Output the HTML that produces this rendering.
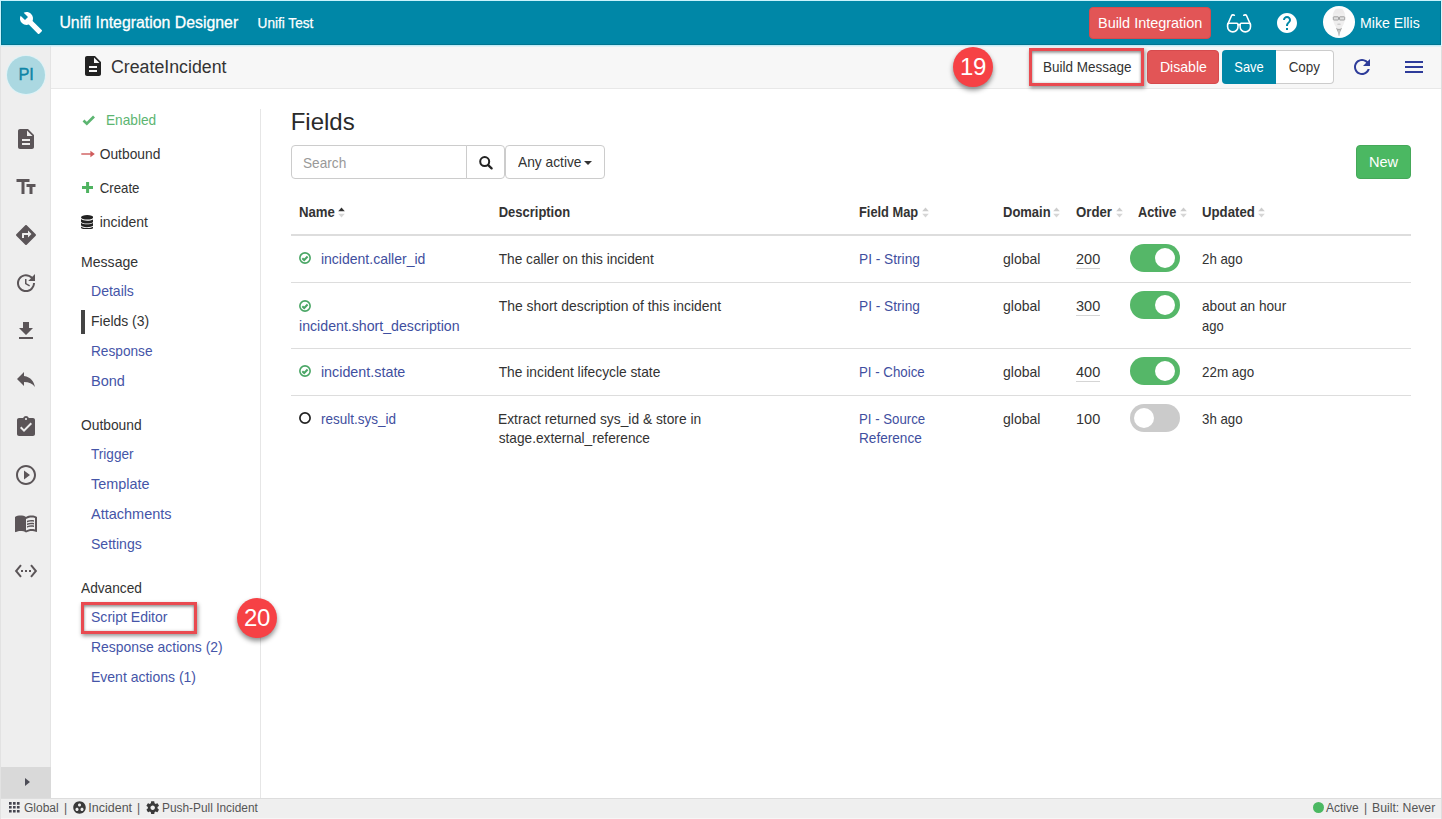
<!DOCTYPE html>
<html>
<head>
<meta charset="utf-8">
<title>Unifi Integration Designer</title>
<style>
*{box-sizing:border-box;margin:0;padding:0}
html,body{width:1442px;height:819px;overflow:hidden;background:#fff}
body{font-family:"Liberation Sans",sans-serif;font-size:14px;color:#333;position:relative}
.abs{position:absolute}
svg{display:block}
#frame{position:absolute;left:0;top:0;width:1442px;height:819px;pointer-events:none;z-index:50}
#frame i{position:absolute;display:block}
/* header */
#hdr{position:absolute;left:1px;top:1px;width:1440px;height:44px;background:#0087a7;box-shadow:inset 1px -1px 0 #007591, inset -1px 0 0 #007591}
#hdr .title{position:absolute;left:58px;top:11px;font-size:16.5px;color:#fff;white-space:nowrap;line-height:20px;-webkit-text-stroke:.3px #fff}
#hdr .sub{position:absolute;left:256px;top:12px;font-size:14px;color:#fff;white-space:nowrap;line-height:20px;-webkit-text-stroke:.25px #fff}
.btn{position:absolute;white-space:nowrap;text-align:center;border-radius:4px;font-size:14.5px;line-height:20px}
/* sub header */
#sub{position:absolute;left:51px;top:45px;width:1390px;height:44px;background:#f7f7f7;border-bottom:1px solid #e8e8e8}
#side{position:absolute;left:1px;top:45px;width:50px;height:753px;background:#eeeeee;border-right:1px solid #e4e4e4}
#side .ic{position:absolute;left:13px;width:24px;height:24px}
#side svg{fill:#5b5558}
#tog{position:absolute;left:1px;top:767px;width:50px;height:31px;background:#d9d9d9}
#foot{position:absolute;left:1px;top:798px;width:1440px;height:20px;background:#efefef;border-top:1px solid #dddddd;font-size:12px;color:#555}
/* nav */
.nav{position:absolute;white-space:nowrap;font-size:14.5px;line-height:20px;color:#333}
.nav.l{color:#4555a8}
/* table */
.th{position:absolute;top:202px;font-weight:bold;font-size:14.5px;line-height:20px;color:#333;white-space:nowrap}
.td{position:absolute;font-size:14.5px;line-height:19px;color:#333;white-space:nowrap}
.td.l{color:#3f4fa0}
.hr{position:absolute;left:291px;width:1120px;height:1px;background:#dddddd}
.sw{position:absolute;left:1130px;width:50px;height:28px;border-radius:14px;background:#55b768}
.sw i{position:absolute;top:4px;left:25px;width:20.400px;height:20.400px;border-radius:11px;background:#fff}
.sw.off{background:#cbcbcb}
.sw.off i{left:3.700px}
.btn span{display:inline-block;transform-origin:50% 50%}
.fitl{transform-origin:0 50%}
.sort{position:absolute;top:207px;width:7px;height:11px}
</style>
<style id="fit">
#t_title{transform:translate(0.40px,0.00px) scaleX(0.9602);transform-origin:0 50%}
#t_sub{transform:translate(0.60px,0.00px) scaleX(0.9724);transform-origin:0 50%}
#t_ci{transform:translate(0.00px,0.00px) scaleX(0.9863);transform-origin:0 50%}
#t_user{transform:translate(-1.00px,0.00px) scaleX(0.9750);transform-origin:0 50%}
#b_bi{transform:translate(-0.20px,0.00px) scaleX(0.9963);transform-origin:50% 50%}
#b_bm{transform:translate(0.70px,0.00px) scaleX(0.9287);transform-origin:50% 50%}
#b_dis{transform:translate(0.20px,0.00px) scaleX(0.9716);transform-origin:50% 50%}
#b_save{transform:translate(0.50px,0.00px) scaleX(0.8906);transform-origin:50% 50%}
#b_copy{transform:translate(-0.60px,0.00px) scaleX(0.9235);transform-origin:50% 50%}
#n_en{transform:translate(-1.00px,0.00px) scaleX(0.9423);transform-origin:0 50%}
#n_ob{transform:translate(0.70px,0.00px) scaleX(0.9524);transform-origin:0 50%}
#n_cr{transform:translate(0.70px,0.00px) scaleX(0.9140);transform-origin:0 50%}
#n_in{transform:translate(0.70px,0.00px) scaleX(0.9660);transform-origin:0 50%}
#n_msg{transform:translate(0.00px,0.00px) scaleX(0.9707);transform-origin:0 50%}
#n_det{transform:translate(0.00px,0.00px) scaleX(0.9674);transform-origin:0 50%}
#n_fld{transform:translate(0.00px,0.00px) scaleX(0.9627);transform-origin:0 50%}
#n_rsp{transform:translate(0.00px,0.00px) scaleX(0.9422);transform-origin:0 50%}
#n_bnd{transform:translate(0.00px,0.00px) scaleX(1.0000);transform-origin:0 50%}
#n_out{transform:translate(0.00px,0.00px) scaleX(0.9524);transform-origin:0 50%}
#n_trg{transform:translate(0.00px,0.00px) scaleX(0.9370);transform-origin:0 50%}
#n_tpl{transform:translate(0.00px,0.00px) scaleX(0.9934);transform-origin:0 50%}
#n_att{transform:translate(0.00px,0.00px) scaleX(1.0000);transform-origin:0 50%}
#n_set{transform:translate(0.00px,0.00px) scaleX(0.9689);transform-origin:0 50%}
#n_adv{transform:translate(0.00px,0.00px) scaleX(0.9453);transform-origin:0 50%}
#n_se{transform:translate(0.00px,0.00px) scaleX(0.9679);transform-origin:0 50%}
#n_ra{transform:translate(0.00px,0.00px) scaleX(0.9610);transform-origin:0 50%}
#n_ea{transform:translate(0.00px,0.00px) scaleX(0.9654);transform-origin:0 50%}
#h_fields{transform:translate(0.70px,0.00px) scaleX(1.0000);transform-origin:0 50%}
#t_search{transform:translate(-1.00px,0.00px) scaleX(0.9409);transform-origin:0 50%}
#t_any{transform:translate(0.00px,0.00px) scaleX(0.9490);transform-origin:0 50%}
#b_new{transform:translate(0.00px,0.00px) scaleX(1.0051);transform-origin:50% 50%}
#h_name{transform:translate(0.00px,0.00px) scaleX(0.9093);transform-origin:0 50%}
#h_desc{transform:translate(0.70px,0.00px) scaleX(0.8949);transform-origin:0 50%}
#h_fm{transform:translate(0.00px,0.00px) scaleX(0.8846);transform-origin:0 50%}
#h_dom{transform:translate(0.00px,0.00px) scaleX(0.8953);transform-origin:0 50%}
#h_ord{transform:translate(0.00px,0.00px) scaleX(0.9113);transform-origin:0 50%}
#h_act{transform:translate(0.00px,0.00px) scaleX(0.8800);transform-origin:0 50%}
#h_upd{transform:translate(0.00px,0.00px) scaleX(0.9106);transform-origin:0 50%}
#r0_name{transform:translate(-0.10px,0.00px) scaleX(0.9673);transform-origin:0 50%}
#r1_name{transform:translate(0.00px,0.00px) scaleX(0.9767);transform-origin:0 50%}
#r2_name{transform:translate(-0.10px,0.00px) scaleX(0.9881);transform-origin:0 50%}
#r3_name{transform:translate(-0.10px,0.00px) scaleX(0.9317);transform-origin:0 50%}
#r0_d1{transform:translate(0.70px,0.00px) scaleX(0.9431);transform-origin:0 50%}
#r1_d1{transform:translate(0.70px,0.00px) scaleX(0.9582);transform-origin:0 50%}
#r2_d1{transform:translate(0.70px,0.00px) scaleX(0.9506);transform-origin:0 50%}
#r3_d1{transform:translate(0.00px,0.00px) scaleX(0.9514);transform-origin:0 50%}
#r3_d2{transform:translate(0.70px,0.00px) scaleX(0.9431);transform-origin:0 50%}
#r0_f1{transform:translate(0.00px,0.00px) scaleX(0.9444);transform-origin:0 50%}
#r1_f1{transform:translate(0.00px,0.00px) scaleX(0.9444);transform-origin:0 50%}
#r2_f1{transform:translate(0.00px,0.00px) scaleX(0.9157);transform-origin:0 50%}
#r3_f1{transform:translate(0.00px,0.00px) scaleX(0.9127);transform-origin:0 50%}
#r3_f2{transform:translate(0.00px,0.00px) scaleX(0.9379);transform-origin:0 50%}
#r0_dom{transform:translate(0.00px,0.00px) scaleX(0.9658);transform-origin:0 50%}
#r1_dom{transform:translate(0.00px,0.00px) scaleX(0.9658);transform-origin:0 50%}
#r2_dom{transform:translate(0.00px,0.00px) scaleX(0.9658);transform-origin:0 50%}
#r3_dom{transform:translate(0.00px,0.00px) scaleX(0.9658);transform-origin:0 50%}
#r0_ord{transform:translate(0.00px,0.00px) scaleX(1.0000);transform-origin:0 50%}
#r1_ord{transform:translate(0.00px,0.00px) scaleX(1.0000);transform-origin:0 50%}
#r2_ord{transform:translate(0.00px,0.00px) scaleX(1.0000);transform-origin:0 50%}
#r3_ord{transform:translate(0.00px,0.00px) scaleX(1.0000);transform-origin:0 50%}
#r0_u1{transform:translate(0.00px,0.00px) scaleX(0.9159);transform-origin:0 50%}
#r1_u1{transform:translate(0.00px,0.00px) scaleX(0.9411);transform-origin:0 50%}
#r1_u2{transform:translate(0.00px,0.00px) scaleX(0.8958);transform-origin:0 50%}
#r2_u1{transform:translate(0.00px,0.00px) scaleX(0.9232);transform-origin:0 50%}
#r3_u1{transform:translate(0.00px,0.00px) scaleX(0.9159);transform-origin:0 50%}
#f_glob{transform:translate(0.00px,0.00px) scaleX(1.0000);transform-origin:0 50%}
#f_inc{transform:translate(-0.70px,0.00px) scaleX(1.0420);transform-origin:0 50%}
#f_pp{transform:translate(0.00px,0.00px) scaleX(0.9906);transform-origin:0 50%}
#f_act{transform:translate(0.00px,0.00px) scaleX(1.0000);transform-origin:0 50%}
#f_built{transform:translate(0.00px,0.00px) scaleX(1.0197);transform-origin:0 50%}
</style>
</head>
<body>
<div id="hdr">
  <svg class="abs" style="left:18px;top:10px" width="24" height="24" viewBox="0 0 24 24" fill="#fff"><path d="M22.7 19l-9.1-9.1c.9-2.3.4-5-1.5-6.9-2-2-5-2.4-7.4-1.3L9 6 6 9 1.6 4.7C.4 7.1.9 10.1 2.9 12.1c1.9 1.9 4.6 2.4 6.9 1.5l9.1 9.1c.4.4 1 .4 1.4 0l2.3-2.3c.5-.4.5-1.1.1-1.4z"/></svg>
  <div class="title" id="t_title">Unifi Integration Designer</div>
  <div class="sub" id="t_sub">Unifi Test</div>
  <div class="btn" style="left:1088px;top:6px;width:122px;height:32px;background:#e25556;border:1px solid #d64a4d;color:#fff;padding-top:5px"><span id="b_bi">Build Integration</span></div>
  <svg class="abs" id="i_glass" style="left:1225px;top:13px" width="26" height="20" viewBox="0 0 26 20" fill="none" stroke="#fff" stroke-width="1.6" stroke-linecap="round" stroke-linejoin="round"><path d="M1.600 10.400Q1.600 9.300 2.700 9.300H10.900Q12 9.300 12 10.400V12.700A5.200 5.200 0 0 1 1.600 12.700Z"/><path d="M14.100 10.400Q14.100 9.300 15.200 9.300H23.400Q24.500 9.300 24.500 10.400V12.700A5.200 5.200 0 0 1 14.100 12.700Z"/><path d="M12 10.800h2.100"/><path d="M1.900 10L5.500 1.800Q6 .7 7.100 .9L8.300 1.200M24.200 10L20.600 1.800Q20.100 .7 19 .9L17.800 1.200"/></svg>
  <svg class="abs" id="i_help" style="left:1274px;top:10px" width="24" height="24" viewBox="0 0 24 24" fill="#fff"><path d="M12 2C6.48 2 2 6.48 2 12s4.48 10 10 10 10-4.48 10-10S17.52 2 12 2zm1 17h-2v-2h2v2zm2.07-7.75l-.9.92C13.45 12.9 13 13.5 13 15h-2v-.5c0-1.1.45-2.1 1.17-2.83l1.24-1.26c.37-.36.59-.86.59-1.41 0-1.1-.9-2-2-2s-2 .9-2 2H8c0-2.21 1.79-4 4-4s4 1.79 4 4c0 .88-.36 1.68-.93 2.25z"/></svg>
  <div class="abs" id="avatar" style="left:1322px;top:5px;width:32px;height:32px;border-radius:16px;background:#fdfdfd;overflow:hidden">
    <svg width="32" height="32" viewBox="0 0 32 32"><path d="M16 2.500c3.600 0 6.200 3 6.200 7.500 0 3.500-.8 7-2.200 9.500-1 1.800-2.400 3-4 3s-3-1.200-4-3C10.600 17 9.800 13.500 9.800 10c0-4.500 2.600-7.500 6.200-7.500z" fill="#efeeee"/><path d="M12.400 2.800h7.200l1.800 5H10.600z" fill="#e9e8e8" opacity=".6"/><rect x="10.300" y="10.800" width="5.200" height="3.200" rx=".6" fill="#e0e0e0" stroke="#9a9a9a" stroke-width=".9"/><rect x="16.500" y="10.800" width="5.200" height="3.200" rx=".6" fill="#e0e0e0" stroke="#9a9a9a" stroke-width=".9"/><path d="M15.500 11.800h1" stroke="#9a9a9a" stroke-width=".9"/><path d="M14.600 17.500h2.800l.3 1.600h-3.400z" fill="#cfcfcf"/><path d="M12.800 21.500c1 .9 2 1.300 3.200 1.300s2.200-.4 3.200-1.300l-1.900 4.300L16 30l-1.300-4.200z" fill="#a9a9a9"/><path d="M15.300 24h1.400l-.3 6h-.8z" fill="#cfcfcf"/></svg>
  </div>
  <div class="abs" id="t_user" style="left:1360px;top:12px;font-size:14.5px;line-height:20px;color:#fff;white-space:nowrap">Mike Ellis</div>
</div>
<div id="side">
  <div class="abs" style="left:6px;top:11px;width:38px;height:38px;border-radius:19px;background:#abd8e1;box-shadow:0 0 0 1px #dff2f6;color:#0e85a6;font-size:16.400px;line-height:36px;text-align:center;letter-spacing:-.2px;-webkit-text-stroke:.4px #0e85a6" id="t_pi">PI</div>
  <svg class="ic" style="top:82px" viewBox="0 0 24 24"><path d="M14 2H6c-1.1 0-1.99.9-1.99 2L4 20c0 1.1.89 2 1.99 2H18c1.1 0 2-.9 2-2V8l-6-6zm2 16H8v-2h8v2zm0-4H8v-2h8v2zm-3-5V3.5L18.5 9H13z"/></svg>
  <svg class="ic" style="top:130px" viewBox="0 0 24 24"><path d="M2.5 4v3h5v12h3V7h5V4h-13zm19 5h-9v3h3v7h3v-7h3V9z"/></svg>
  <svg class="ic" style="top:178px" viewBox="0 0 24 24"><path d="M21.71 11.29l-9-9c-.39-.39-1.02-.39-1.41 0l-9 9c-.39.39-.39 1.02 0 1.41l9 9c.39.39 1.02.39 1.41 0l9-9c.39-.38.39-1.01 0-1.41zM14 14.5V12h-4v3H8v-4c0-.55.45-1 1-1h5V7.5l3.5 3.5-3.5 3.5z"/></svg>
  <svg class="ic" style="top:226px" viewBox="0 0 24 24"><path d="M21 10.12h-6.78l2.74-2.82c-2.73-2.7-7.15-2.8-9.88-.1-2.73 2.71-2.73 7.08 0 9.79 2.73 2.71 7.15 2.71 9.88 0C18.32 15.65 19 14.08 19 12.1h2c0 1.98-.88 4.55-2.64 6.29-3.51 3.48-9.21 3.48-12.72 0-3.5-3.47-3.53-9.11-.02-12.58 3.51-3.47 9.14-3.47 12.65 0L21 3v7.12zM12.5 8v4.25l3.5 2.08-.72 1.21L11 13V8h1.5z"/></svg>
  <svg class="ic" style="top:274px" viewBox="0 0 24 24"><path d="M19 9h-4V3H9v6H5l7 7 7-7zM5 18v2h14v-2H5z"/></svg>
  <svg class="ic" style="top:322px" viewBox="0 0 24 24"><path d="M10 9V5l-7 7 7 7v-4.1c5 0 8.5 1.6 11 5.1-1-5-4-10-11-11z"/></svg>
  <svg class="ic" style="top:370px" viewBox="0 0 24 24"><path d="M19 3h-4.18C14.4 1.84 13.3 1 12 1c-1.3 0-2.4.84-2.82 2H5c-1.1 0-2 .9-2 2v14c0 1.1.9 2 2 2h14c1.1 0 2-.9 2-2V5c0-1.1-.9-2-2-2zm-7 0c.55 0 1 .45 1 1s-.45 1-1 1-1-.45-1-1 .45-1 1-1zm-2 14l-4-4 1.41-1.41L10 14.17l6.59-6.59L18 9l-8 8z"/></svg>
  <svg class="ic" style="top:418px" viewBox="0 0 24 24"><path d="M10 16.5l6-4.5-6-4.5v9zM12 2C6.48 2 2 6.48 2 12s4.48 10 10 10 10-4.48 10-10S17.52 2 12 2zm0 18c-4.41 0-8-3.59-8-8s3.59-8 8-8 8 3.59 8 8-3.59 8-8 8z"/></svg>
  <svg class="ic" style="top:466px" viewBox="0 0 24 24"><path d="M21 5c-1.110-.35-2.330-.5-3.500-.5-1.950 0-4.050.4-5.500 1.500-1.450-1.100-3.550-1.500-5.500-1.500S2.450 4.900 1 6v14.650c0 .25.250.5.5.5.1 0 .15-.05.250-.05C3.100 20.450 5.050 20 6.500 20c1.950 0 4.050.4 5.500 1.500 1.350-.85 3.800-1.500 5.500-1.500 1.650 0 3.350.3 4.750 1.050.1.050.15.050.250.050.250 0 .5-.25.5-.5V6c-.6-.45-1.250-.75-2-1zm0 13.500c-1.100-.35-2.300-.5-3.500-.5-1.700 0-4.150.65-5.500 1.500V8c1.350-.85 3.800-1.500 5.500-1.500 1.200 0 2.400.15 3.500.5v11.500zM17.500 10.500c.880 0 1.730.090 2.500.260V9.240c-.79-.15-1.640-.24-2.500-.24-1.700 0-3.240.29-4.500.83v1.660c1.130-.64 2.700-.99 4.500-.99zM13 12.490v1.660c1.130-.64 2.700-.99 4.500-.99.880 0 1.730.090 2.500.260V11.900c-.79-.15-1.640-.24-2.500-.24-1.700 0-3.240.3-4.500.83zM17.500 14.330c-1.700 0-3.240.29-4.500.83v1.660c1.130-.64 2.700-.99 4.500-.99.880 0 1.730.090 2.500.260v-1.520c-.79-.16-1.640-.24-2.500-.24z"/></svg>
  <svg class="ic" style="top:514px" viewBox="0 0 24 24"><path d="M7.77 6.76L6.23 5.48.82 12l5.41 6.520 1.54-1.28L3.42 12l4.35-5.240zM7 13h2v-2H7v2zm10-2h-2v2h2v-2zm-6 2h2v-2h-2v2zm6.770-7.520l-1.54 1.280L20.580 12l-4.350 5.240 1.540 1.280L23.180 12l-5.410-6.520z"/></svg>
</div>
<div id="sub">
  <svg class="abs" style="left:30px;top:9px" width="24" height="24" viewBox="0 0 24 24" fill="#222"><path d="M14 2H6c-1.1 0-1.99.9-1.99 2L4 20c0 1.1.89 2 1.99 2H18c1.1 0 2-.9 2-2V8l-6-6zm2 16H8v-2h8v2zm0-4H8v-2h8v2zm-3-5V3.5L18.5 9H13z"/></svg>
  <div class="abs" id="t_ci" style="left:60px;top:10px;font-size:18px;line-height:24px;color:#333;white-space:nowrap">CreateIncident</div>
  <div class="abs" id="c19" style="left:902px;top:2px;width:40px;height:40px;border-radius:20px;background:#f64145;box-shadow:0 3px 5px rgba(0,0,0,.45);color:#fff;font-size:24px;line-height:40px;letter-spacing:-.3px;text-align:center">19</div>
  <div class="abs" id="bm_box" style="left:978px;top:3px;width:115px;height:38px;border:3px solid #e94a50;background:#fff;box-shadow:1px 2px 4px rgba(0,0,0,.42), inset 0 2px 3px rgba(0,0,0,.34), inset 0 0 3px rgba(0,0,0,.22)"></div>
  <div class="btn" style="left:981px;top:6px;width:109px;height:32px;color:#333;padding-top:6px"><span id="b_bm">Build Message</span></div>
  <div class="btn" style="left:1096px;top:5px;width:72px;height:34px;background:#e25556;border:1px solid #d64a4d;color:#fff;padding-top:6px"><span id="b_dis">Disable</span></div>
  <div class="btn" style="left:1171px;top:5px;width:54px;height:34px;background:#0087a7;color:#fff;padding-top:7px;border-radius:4px 0 0 4px"><span id="b_save">Save</span></div>
  <div class="btn" style="left:1225px;top:5px;width:58px;height:34px;background:#fff;color:#333;padding-top:6px;border:1px solid #ccc;border-left:none;border-radius:0 4px 4px 0"><span id="b_copy">Copy</span></div>
  <svg class="abs" id="i_ref" style="left:1298.500px;top:10px" width="24" height="24" viewBox="0 0 24 24" fill="#2e3c9a"><path d="M17.65 6.35C16.2 4.9 14.21 4 12 4c-4.42 0-7.99 3.58-7.990 8s3.570 8 7.990 8c3.730 0 6.840-2.550 7.730-6h-2.080c-.82 2.330-3.040 4-5.650 4-3.310 0-6-2.690-6-6s2.690-6 6-6c1.660 0 3.140.69 4.220 1.780L13 11h7V4l-2.350 2.350z"/></svg>
  <svg class="abs" id="i_menu" style="left:1351px;top:10px" width="24" height="24" viewBox="0 0 24 24" fill="#2e3c9a"><path d="M3 18h18v-2H3v2zm0-5h18v-2H3v2zm0-7v2h18V6H3z"/></svg>
</div>
<div id="main">
<div class="abs" style="left:260px;top:109px;width:1px;height:689px;background:#e6e6e6"></div>
<svg class="abs" id="i_chk" style="left:81.500px;top:115px" width="13.500" height="10.500" viewBox="0 0 13.500 10.500"><path d="M1.500 5.600l3.300 3.100L12 1.500" fill="none" stroke="#5cb571" stroke-width="2.700"/></svg>
<div class="nav "  id="n_en" style="color:#5cb571;left:107px;top:110px">Enabled</div>
<svg class="abs" id="i_arr" style="left:80.500px;top:150px" width="14" height="8" viewBox="0 0 14 8"><path d="M.3 4h10" stroke="#cf5b5b" stroke-width="1.400" fill="none"/><path d="M9.400 .8L13.800 4 9.400 7.200z" fill="#cf5b5b"/></svg>
<div class="nav " id="n_ob" style="left:99px;top:144px">Outbound</div>
<svg class="abs" id="i_plus" style="left:81.500px;top:181.800px" width="11.200" height="11.200" viewBox="0 0 11.200 11.200"><path d="M5.600 0v11.200M0 5.600h11.200" stroke="#4fb360" stroke-width="3" fill="none"/></svg>
<div class="nav " id="n_cr" style="left:99px;top:178px">Create</div>
<svg class="abs" id="i_db" style="left:80.800px;top:215px" width="12.400" height="14.400" viewBox="0 0 12.400 14.400" fill="#222"><ellipse cx="6.200" cy="2.300" rx="6.200" ry="2.300"/><path d="M0 4.100c1.200 1.100 3.600 1.600 6.200 1.600s5-.5 6.200-1.600v2.300c0 1.200-2.800 2.200-6.200 2.200S0 7.600 0 6.400z"/><path d="M0 8c1.200 1.100 3.600 1.600 6.200 1.600s5-.5 6.200-1.600v2.300c0 1.200-2.800 2.200-6.200 2.200S0 11.500 0 10.300z" transform="translate(0,-.3)"/><path d="M0 11.500c1.200 1.100 3.600 1.600 6.200 1.600s5-.5 6.200-1.600v.9c0 1.200-2.800 2-6.200 2S0 13.600 0 12.400z"/></svg>
<div class="nav " id="n_in" style="left:99px;top:212px">incident</div>
<div class="nav " id="n_msg" style="left:81px;top:252px">Message</div>
<div class="nav l" id="n_det" style="left:91px;top:281px">Details</div>
<div class="abs" style="left:81px;top:310px;width:4px;height:24px;background:#444"></div>
<div class="nav " id="n_fld" style="left:91px;top:311px">Fields (3)</div>
<div class="nav l" id="n_rsp" style="left:91px;top:341px">Response</div>
<div class="nav l" id="n_bnd" style="left:91px;top:371px">Bond</div>
<div class="nav " id="n_out" style="left:81px;top:415px">Outbound</div>
<div class="nav l" id="n_trg" style="left:91px;top:444px">Trigger</div>
<div class="nav l" id="n_tpl" style="left:91px;top:474px">Template</div>
<div class="nav l" id="n_att" style="left:91px;top:504px">Attachments</div>
<div class="nav l" id="n_set" style="left:91px;top:534px">Settings</div>
<div class="nav " id="n_adv" style="left:81px;top:578px">Advanced</div>
<div class="abs" id="se_box" style="left:81px;top:602px;width:116px;height:32px;border:3px solid #e94a50;box-shadow:1px 2px 4px rgba(0,0,0,.42), inset 0 2px 3px rgba(0,0,0,.34), inset 0 0 3px rgba(0,0,0,.22)"></div>
<div class="nav l" id="n_se" style="left:91px;top:607px">Script Editor</div>
<div class="nav l" id="n_ra" style="left:91px;top:637px">Response actions (2)</div>
<div class="nav l" id="n_ea" style="left:91px;top:667px">Event actions (1)</div>
<div class="abs" id="c20" style="left:237px;top:598px;width:40px;height:40px;border-radius:20px;background:#f64145;box-shadow:0 3px 5px rgba(0,0,0,.45);color:#fff;font-size:24px;line-height:40px;letter-spacing:-.3px;text-align:center">20</div>
<div class="abs" id="h_fields" style="left:290px;top:107px;font-size:24px;line-height:30px;color:#2a2a2a;white-space:nowrap">Fields</div>
<div class="abs" style="left:291px;top:145px;width:176px;height:34px;border:1px solid #ccc;border-radius:4px 0 0 4px;background:#fff"></div>
<div class="abs" id="t_search" style="left:304px;top:153px;font-size:14.5px;line-height:20px;color:#999">Search</div>
<div class="abs" style="left:466px;top:145px;width:39px;height:34px;border:1px solid #ccc;border-radius:0 4px 4px 0;background:#fff"></div>
<svg class="abs" id="i_srch" style="left:479px;top:156.300px" width="14" height="14" viewBox="0 0 14 14"><circle cx="5.700" cy="5.600" r="4.500" fill="none" stroke="#222" stroke-width="2"/><path d="M9.200 9.100l3.400 3.300" stroke="#222" stroke-width="2.200" stroke-linecap="round"/></svg>
<div class="abs" style="left:505px;top:145px;width:100px;height:34px;border:1px solid #ccc;border-radius:4px;background:#fff"></div>
<div class="abs" id="t_any" style="left:518px;top:152px;font-size:14.5px;line-height:20px;color:#333;white-space:nowrap">Any active</div>
<div class="abs" style="left:584px;top:161px;width:0;height:0;border-left:4px solid transparent;border-right:4px solid transparent;border-top:4px solid #333"></div>
<div class="btn" style="left:1356px;top:145px;width:55px;height:34px;background:#4bb862;border:1px solid #45a859;color:#fff;padding-top:6px"><span id="b_new">New</span></div>
<div class="th" id="h_name" style="left:299px">Name</div>
<svg class="sort" style="left:338px" viewBox="0 0 7 11"><path d="M3.500 0.500L6.800 4.300H.2z" fill="#333"/><path d="M3.500 10.500L6.800 6.700H.2z" fill="#d6d6d6"/></svg>
<div class="th" id="h_desc" style="left:498px">Description</div>
<div class="th" id="h_fm" style="left:859px">Field Map</div>
<svg class="sort" style="left:922px" viewBox="0 0 7 11"><path d="M3.500 0.500L6.800 4.300H.2z" fill="#ccc"/><path d="M3.500 10.500L6.800 6.700H.2z" fill="#d6d6d6"/></svg>
<div class="th" id="h_dom" style="left:1003px">Domain</div>
<svg class="sort" style="left:1053px" viewBox="0 0 7 11"><path d="M3.500 0.500L6.800 4.300H.2z" fill="#ccc"/><path d="M3.500 10.500L6.800 6.700H.2z" fill="#d6d6d6"/></svg>
<div class="th" id="h_ord" style="left:1076px">Order</div>
<svg class="sort" style="left:1116px" viewBox="0 0 7 11"><path d="M3.500 0.500L6.800 4.300H.2z" fill="#ccc"/><path d="M3.500 10.500L6.800 6.700H.2z" fill="#d6d6d6"/></svg>
<div class="th" id="h_act" style="left:1138px">Active</div>
<svg class="sort" style="left:1180px" viewBox="0 0 7 11"><path d="M3.500 0.500L6.800 4.300H.2z" fill="#ccc"/><path d="M3.500 10.500L6.800 6.700H.2z" fill="#d6d6d6"/></svg>
<div class="th" id="h_upd" style="left:1202px">Updated</div>
<svg class="sort" style="left:1258px" viewBox="0 0 7 11"><path d="M3.500 0.500L6.800 4.300H.2z" fill="#ccc"/><path d="M3.500 10.500L6.800 6.700H.2z" fill="#d6d6d6"/></svg>
<div class="hr" style="top:234px;height:2px"></div>
<div class="hr" style="top:282px"></div>
<div class="hr" style="top:348px"></div>
<div class="hr" style="top:395px"></div>
<svg class="abs" style="left:299.100px;top:252px" width="12" height="12" viewBox="0 0 12 12" fill="none" stroke="#4aa665"><circle cx="6" cy="6" r="5.150" stroke-width="1.600"/><path d="M3.300 6.200l1.900 1.800 3.400-3.500" stroke-width="2"/></svg>
<div class="td l" id="r0_name" style="left:321px;top:250px">incident.caller_id</div>
<div class="td " id="r0_d1" style="left:498px;top:250px">The caller on this incident</div>
<div class="td l" id="r0_f1" style="left:859px;top:250px">PI - String</div>
<div class="td " id="r0_dom" style="left:1003px;top:250px">global</div>
<div class="td " id="r0_ord" style="left:1076px;top:250px">200</div>
<div class="abs" style="left:1076px;top:268px;width:24px;height:1px;background:#d5d5d5"></div>
<div class="sw" style="top:244px"><i></i></div>
<div class="td " id="r0_u1" style="left:1202px;top:250px">2h ago</div>
<svg class="abs" style="left:299.100px;top:300px" width="12" height="12" viewBox="0 0 12 12" fill="none" stroke="#4aa665"><circle cx="6" cy="6" r="5.150" stroke-width="1.600"/><path d="M3.300 6.200l1.900 1.800 3.400-3.500" stroke-width="2"/></svg>
<div class="td l" id="r1_name" style="left:299px;top:317px">incident.short_description</div>
<div class="td " id="r1_d1" style="left:498px;top:297px">The short description of this incident</div>
<div class="td l" id="r1_f1" style="left:859px;top:297px">PI - String</div>
<div class="td " id="r1_dom" style="left:1003px;top:297px">global</div>
<div class="td " id="r1_ord" style="left:1076px;top:297px">300</div>
<div class="abs" style="left:1076px;top:315px;width:24px;height:1px;background:#d5d5d5"></div>
<div class="sw" style="top:291px"><i></i></div>
<div class="td " id="r1_u1" style="left:1202px;top:297px">about an hour</div>
<div class="td " id="r1_u2" style="left:1202px;top:316.5px">ago</div>
<svg class="abs" style="left:299.100px;top:365px" width="12" height="12" viewBox="0 0 12 12" fill="none" stroke="#4aa665"><circle cx="6" cy="6" r="5.150" stroke-width="1.600"/><path d="M3.300 6.200l1.900 1.800 3.400-3.500" stroke-width="2"/></svg>
<div class="td l" id="r2_name" style="left:321px;top:363px">incident.state</div>
<div class="td " id="r2_d1" style="left:498px;top:363px">The incident lifecycle state</div>
<div class="td l" id="r2_f1" style="left:859px;top:363px">PI - Choice</div>
<div class="td " id="r2_dom" style="left:1003px;top:363px">global</div>
<div class="td " id="r2_ord" style="left:1076px;top:363px">400</div>
<div class="abs" style="left:1076px;top:381px;width:24px;height:1px;background:#d5d5d5"></div>
<div class="sw" style="top:357px"><i></i></div>
<div class="td " id="r2_u1" style="left:1202px;top:363px">22m ago</div>
<svg class="abs" style="left:299px;top:412px" width="12" height="12" viewBox="0 0 12 12" fill="none" stroke="#222"><circle cx="6" cy="6" r="5.100" stroke-width="1.700"/></svg>
<div class="td l" id="r3_name" style="left:321px;top:410px">result.sys_id</div>
<div class="td " id="r3_d1" style="left:498px;top:410px">Extract returned sys_id &amp; store in</div>
<div class="td " id="r3_d2" style="left:498px;top:429px">stage.external_reference</div>
<div class="td l" id="r3_f1" style="left:859px;top:410px">PI - Source</div>
<div class="td l" id="r3_f2" style="left:859px;top:429px">Reference</div>
<div class="td " id="r3_dom" style="left:1003px;top:410px">global</div>
<div class="td " id="r3_ord" style="left:1076px;top:410px">100</div>
<div class="sw off" style="top:404px"><i></i></div>
<div class="td " id="r3_u1" style="left:1202px;top:410px">3h ago</div>
</div>
<div id="tog"><div class="abs" style="left:24.200px;top:11px;width:0;height:0;border-top:4.500px solid transparent;border-bottom:4.500px solid transparent;border-left:5.600px solid #4d4d57"></div></div>
<div id="foot">
  <svg class="abs" style="left:8.300px;top:3.300px" width="10.600" height="10.600" viewBox="4 4 16 16" fill="#454550"><path d="M4 8h4V4H4v4zm6 12h4v-4h-4v4zm-6 0h4v-4H4v4zm0-6h4v-4H4v4zm6 0h4v-4h-4v4zm6-10v4h4V4h-4zm-6 4h4V4h-4v4zm6 6h4v-4h-4v4zm0 6h4v-4h-4v4z"/></svg>
  <div class="abs" id="f_glob" style="left:23px;top:1px;line-height:16px;white-space:nowrap">Global</div>
  <div class="abs" style="left:63px;top:1px;line-height:16px">|</div>
  <svg class="abs" style="left:70.600px;top:1.400px" width="15" height="15" viewBox="0 0 24 24" fill="#3a3a3a"><path d="M12 2C6.480 2 2 6.480 2 12s4.480 10 10 10 10-4.480 10-10S17.520 2 12 2zM8 17.500c-1.380 0-2.500-1.120-2.500-2.500s1.120-2.500 2.500-2.500 2.500 1.120 2.500 2.500-1.120 2.500-2.500 2.500zM9.500 8c0-1.380 1.120-2.500 2.500-2.500s2.500 1.120 2.500 2.500-1.120 2.500-2.500 2.500S9.500 9.380 9.500 8zm6.500 9.500c-1.380 0-2.500-1.120-2.500-2.500s1.120-2.500 2.500-2.500 2.500 1.120 2.500 2.500-1.120 2.500-2.500 2.500z"/></svg>
  <div class="abs" id="f_inc" style="left:88px;top:1px;line-height:16px;white-space:nowrap">Incident</div>
  <div class="abs" style="left:136px;top:1px;line-height:16px">|</div>
  <svg class="abs" style="left:143.700px;top:1.200px" width="15.400" height="15.400" viewBox="0 0 24 24" fill="#3a3a3a"><path d="M19.430 12.980c.04-.32.07-.64.07-.98s-.03-.66-.07-.98l2.110-1.650c.19-.15.24-.42.12-.64l-2-3.460c-.12-.22-.39-.3-.61-.22l-2.490 1c-.52-.4-1.080-.73-1.690-.98l-.38-2.650C14.460 2.180 14.250 2 14 2h-4c-.25 0-.46.18-.49.42l-.38 2.650c-.61.25-1.170.59-1.690.98l-2.490-1c-.23-.09-.49 0-.61.22l-2 3.460c-.13.22-.07.49.12.64l2.110 1.650c-.04.32-.07.65-.07.980s.03.660.07.980l-2.110 1.650c-.19.15-.24.42-.12.64l2 3.460c.12.22.39.3.61.22l2.490-1c.52.4 1.080.73 1.690.98l.38 2.650c.03.240.24.420.49.420h4c.25 0 .46-.18.49-.42l.38-2.650c.61-.25 1.170-.59 1.690-.98l2.490 1c.23.09.49 0 .61-.22l2-3.460c.12-.22.07-.49-.12-.64l-2.110-1.650zM12 15.500c-1.930 0-3.500-1.570-3.500-3.500s1.570-3.500 3.500-3.500 3.500 1.570 3.500 3.500-1.570 3.500-3.500 3.500z"/></svg>
  <div class="abs" id="f_pp" style="left:161px;top:1px;line-height:16px;white-space:nowrap">Push-Pull Incident</div>
  <div class="abs" style="left:1312px;top:3px;width:11px;height:11px;border-radius:6px;background:#4bb862"></div>
  <div class="abs" id="f_act" style="left:1325px;top:1px;line-height:16px;white-space:nowrap">Active</div>
  <div class="abs" style="left:1363px;top:1px;line-height:16px">|</div>
  <div class="abs" id="f_built" style="left:1371px;top:1px;line-height:16px;white-space:nowrap">Built: Never</div>
</div>
<div id="frame">
  <i style="left:0;top:0;width:1442px;height:1px;background:#c9f3fd"></i>
  <i style="left:0;top:1px;width:1px;height:45px;background:#c9f3fd"></i>
  <i style="left:1441px;top:1px;width:1px;height:45px;background:#d9f6fc"></i>
  <i style="left:1px;top:45px;width:1440px;height:1px;background:#c3ecf7"></i>
  <i style="left:1px;top:46px;width:1440px;height:1px;background:rgba(190,232,245,.4)"></i>
  <i style="left:0;top:46px;width:1px;height:773px;background:#e2e2e2"></i>
  <i style="left:1441px;top:46px;width:1px;height:773px;background:#dedede"></i>
  <i style="left:1px;top:818px;width:1440px;height:1px;background:#f6f6f6"></i>
</div>
</body>
</html>
